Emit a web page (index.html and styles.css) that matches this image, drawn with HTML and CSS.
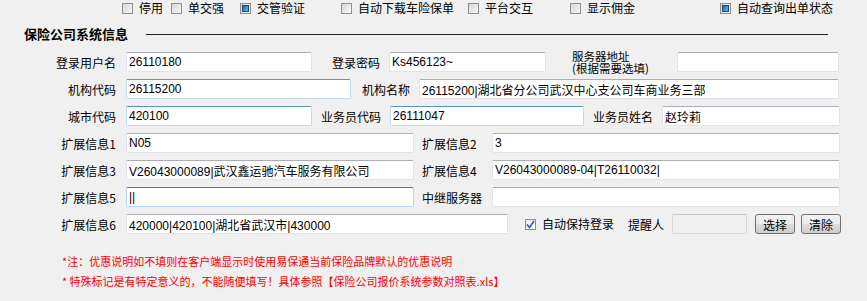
FILE: index.html
```html
<!DOCTYPE html>
<html lang="zh-CN">

<head>
    <meta charset="UTF-8">
    <title>保险公司系统信息</title>
    <link rel="stylesheet" href="styles.css">
</head>

<body>
    <div class="topbar">
        <label class="opt w49"><span class="cb"></span>停用</label>
        <label class="opt w69"><span class="cb"></span>单交强</label>
        <label class="opt w101"><span class="cb on"></span>交管验证</label>
        <label class="opt w127"><span class="cb"></span>自动下载车险保单</label>
        <label class="opt w102"><span class="cb"></span>平台交互</label>
        <label class="opt w150"><span class="cb"></span>显示佣金</label>
        <label class="opt"><span class="cb on"></span>自动查询出单状态</label>
    </div>

    <div class="section-title">
        <span>保险公司系统信息</span>
        <div class="rule"></div>
    </div>

    <div class="form">
        <div class="row">
            <span class="lbl">登录用户名</span>
            <input class="txt" style="width: 186px" value="26110180">
            <span class="lbl2" style="width: 68px">登录密码</span>
            <input class="txt" style="width: 157px" value="Ks456123~">
            <span class="lbl-two"><span>服务器地址</span><span>(根据需要选填)</span></span>
            <input class="txt" style="width: 162px" value="">
        </div>
        <div class="row">
            <span class="lbl">机构代码</span>
            <input class="txt hot" style="width: 225px" value="26115200">
            <span class="lbl2" style="width: 59px">机构名称</span>
            <input class="txt" style="width: 420px" value="26115200|湖北省分公司武汉中心支公司车商业务三部">
        </div>
        <div class="row">
            <span class="lbl">城市代码</span>
            <input class="txt hot" style="width: 186px" value="420100">
            <span class="lbl2" style="width: 69px">业务员代码</span>
            <input class="txt hot" style="width: 194px" value="26111047">
            <span class="lbl2" style="width: 69px">业务员姓名</span>
            <input class="txt" style="width: 178px" value="赵玲莉">
        </div>
        <div class="row">
            <span class="lbl">扩展信息1</span>
            <input class="txt" style="width: 288px" value="N05">
            <span class="lbl3">扩展信息2</span>
            <input class="txt" style="width: 348px" value="3">
        </div>
        <div class="row">
            <span class="lbl">扩展信息3</span>
            <input class="txt" style="width: 288px" value="V26043000089|武汉鑫运驰汽车服务有限公司">
            <span class="lbl3">扩展信息4</span>
            <input class="txt" style="width: 348px" value="V26043000089-04|T26110032|">
        </div>
        <div class="row">
            <span class="lbl">扩展信息5</span>
            <input class="txt focus" style="width: 288px" value="||">
            <span class="lbl3">中继服务器</span>
            <input class="txt" style="width: 348px" value="">
        </div>
        <div class="row">
            <span class="lbl">扩展信息6</span>
            <input class="txt" style="width: 382px" value="420000|420100|湖北省武汉市|430000">
            <label class="opt keep"><span class="cb tick">
                <svg width="9" height="9" viewBox="0 0 9 9"><path d="M1 4.5 L3.5 7.5 L8 1" fill="none" stroke="#3c59a8" stroke-width="1.6"/></svg>
            </span>自动保持登录</label>
            <span class="remind">提醒人</span>
            <input class="txt off" style="width: 75px" value="" disabled>
            <button class="btn first">选择</button>
            <button class="btn">清除</button>
        </div>
    </div>

    <div class="notes">
        <div>*注：优惠说明如不填则在客户端显示时使用易保通当前保险品牌默认的优惠说明</div>
        <div>* 特殊标记是有特定意义的，不能随便填写！具体参照【保险公司报价系统参数对照表.xls】</div>
    </div>
</body>

</html>
```

FILE: styles.css
```css
body {
    margin: 0;
    background: #f0f0f0;
    font-family: "Noto Sans CJK SC", "Liberation Sans", sans-serif;
    font-size: 12px;
    color: #000;
    overflow: hidden;
}

/* 顶部选项 */
.topbar {
    display: flex;
    align-items: center;
    height: 14px;
    padding-top: 1px;
    padding-left: 122px;
}

.opt {
    display: flex;
    align-items: center;
    gap: 6px;
    line-height: 14px;
}

.w49 { width: 49px; }
.w69 { width: 69px; }
.w101 { width: 101px; }
.w127 { width: 127px; }
.w102 { width: 102px; }
.w150 { width: 150px; }

.cb {
    box-sizing: border-box;
    width: 11px;
    height: 11px;
    border: 1px solid #8e8f8f;
    background: linear-gradient(135deg, #d6d6d6, #f8f8f8);
    position: relative;
    flex: none;
    display: flex;
    align-items: center;
    justify-content: center;
}

.cb.on::after {
    content: "";
    position: absolute;
    left: 1px;
    top: 1px;
    width: 7px;
    height: 7px;
    box-sizing: border-box;
    border: 1px solid #1d4b78;
    background: linear-gradient(135deg, #1f6fb4, #5cb8ee);
}

.cb.tick {
    background: linear-gradient(135deg, #e4e8ef, #fbfbfb);
}

/* 标题 */
.section-title {
    display: flex;
    align-items: center;
    margin-top: 11px;
    height: 14px;
    padding-left: 24px;
    margin-right: 39px;
    font-size: 13px;
    font-weight: bold;
}

.rule {
    flex: 1;
    height: 1px;
    background: #222;
    margin-left: 18px;
    margin-top: 2px;
}

/* 表单 */
.form {
    margin-top: 12px;
    display: flex;
    flex-direction: column;
    gap: 7px;
}

.row {
    display: flex;
    align-items: center;
    height: 20px;
}

.lbl {
    width: 116px;
    text-align: right;
    margin-right: 10px;
}

.lbl2 {
    text-align: right;
    margin-right: 9px;
}

.lbl3 {
    width: 70px;
    padding-left: 8px;
}

.lbl-two {
    width: 105px;
    margin-left: 26px;
    display: flex;
    flex-direction: column;
    line-height: 12px;
    font-size: 11.5px;
}

.txt {
    box-sizing: border-box;
    height: 20px;
    margin: 0;
    padding: 0 2px;
    border: 1px solid #e2e3ea;
    border-top-color: #abadb3;
    border-radius: 2px;
    background: #fff;
    font-family: "Liberation Sans", "Noto Sans CJK SC", sans-serif;
    font-size: 12px;
    color: #000;
    outline: none;
}

.txt.hot {
    border-color: #c5daed;
    border-top-color: #5794bf;
}

.txt.focus {
    border-color: #b7d5f2;
    border-top-color: #3d7bad;
}

.txt.off {
    background: #f0f0f0;
    border-color: #dadada;
    border-top-color: #c8c8c8;
}

.keep {
    margin-left: 17px;
}

.remind {
    margin-left: 14px;
    margin-right: 8px;
}

.btn {
    box-sizing: border-box;
    height: 20px;
    width: 40px;
    margin-left: 6px;
    padding: 0;
    border: 1px solid #707070;
    border-radius: 3px;
    background: linear-gradient(#f2f2f2, #ebebeb 50%, #dddddd 51%, #cfcfcf);
    font-family: "Noto Sans CJK SC", sans-serif;
    font-size: 12px;
    color: #000;
}

.btn.first {
    margin-left: 8px;
}

/* 红色说明 */
.notes {
    margin-top: 17px;
    padding-left: 62px;
    color: #ff0000;
    font-size: 11px;
    line-height: 20px;
}
```
